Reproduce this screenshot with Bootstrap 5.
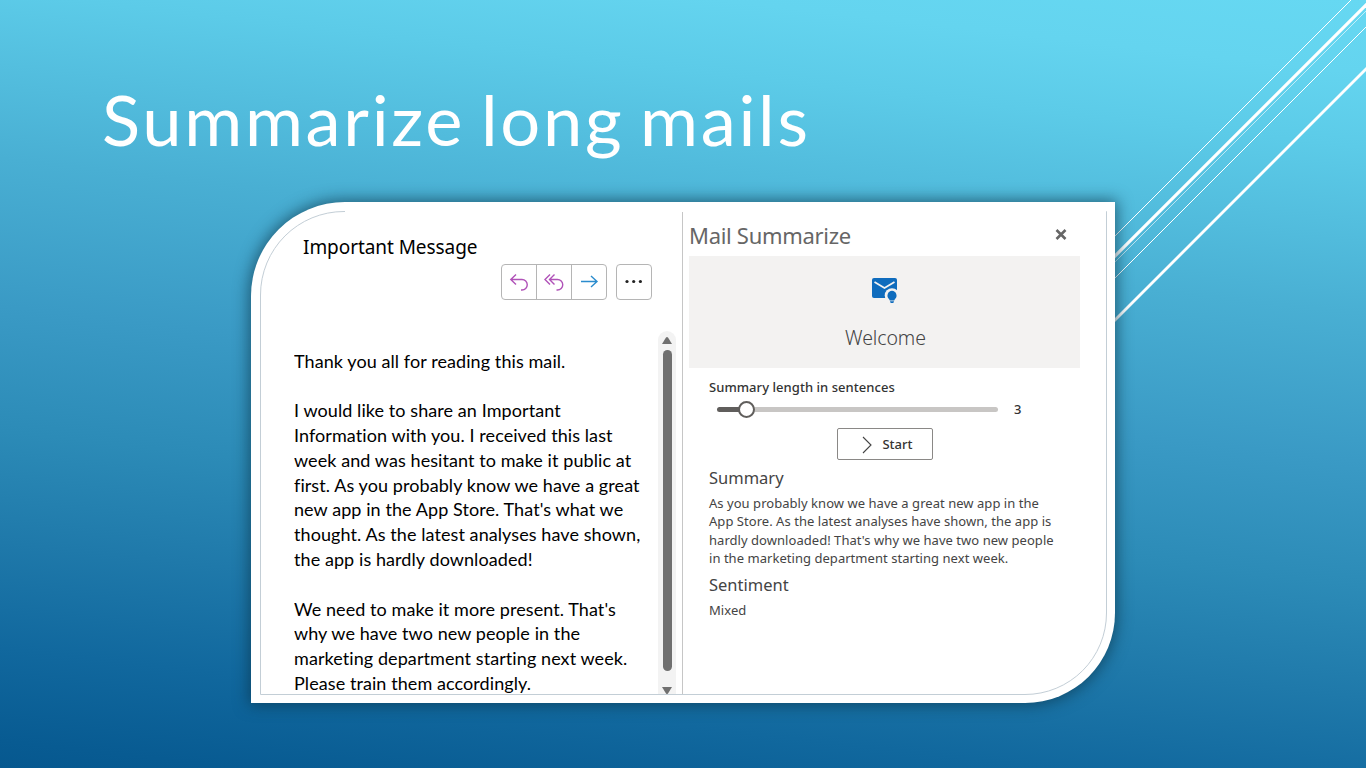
<!DOCTYPE html>
<html lang="en">
<head>
<meta charset="utf-8">
<meta name="viewport" content="width=device-width, initial-scale=1">
<title>Summarize long mails</title>
<link href="https://cdn.jsdelivr.net/npm/bootstrap@5.3.0/dist/css/bootstrap.min.css" rel="stylesheet">
<style>
body{font-family:"Noto Sans","Open Sans",sans-serif}
.slide{width:1366px;height:768px;background:linear-gradient(6.5deg,#06588f 0%,#085b92 3%,#11689e 13%,#1f79aa 24.5%,#2c8bb7 36.5%,#3a9ac5 50%,#49afd3 66%,#5ccbe8 84%,#64d4ef 92%,#66d8f2 100%)}
.rays{left:1106px;top:0;z-index:0}
.slide-title{font:400 70.5px/86px Lato,sans-serif;letter-spacing:2.7px;word-spacing:-5px;padding:76px 0 0 102px;height:202px}
.frame{width:864px;height:501px;margin-left:251px;padding:9px 8px 8px 9px;border-radius:94px 0 90px 0;box-shadow:0 0 15px 2px rgba(10,50,70,.65);z-index:1}
.frame-inner{border:1px solid #c3ced6;border-radius:84px 0 82px 0}
.frame-inner::after{content:"";position:absolute;left:84px;right:0;top:-1px;height:1px;background:#fff}
.mail{width:422px;border-right:1px solid #c6c6c6;padding:22px 0 0 33px}
.subject{font-size:19px;font-weight:400;line-height:26px;letter-spacing:-.06px;padding-left:9px}
.tools{padding:4px 30px 0 0;gap:9px}
.tool-group{border:1px solid #b5b5b5;border-radius:4px;height:36px}
.tool-group button{width:34px;padding:0;border:0;background:none;line-height:0}
.tool-group button+button{border-left:1px solid #b5b5b5;width:35px}
.mail-text{font:400 18px/24.8px Lato,sans-serif;letter-spacing:.08px;white-space:nowrap;padding-top:24.6px}
.mail-text p{margin:0 0 24.8px}
.scroller{width:18px;margin:31px 6px 0 0;background:#f3f3f3;border-radius:9px 9px 0 0}
.scroller .thumb{width:9px;height:321px;background:#707070;border-radius:5px}
.pane{padding:7px 26px 0 6px;color:#555}
.pane-title{font-size:22px;line-height:32px;letter-spacing:-.3px;color:#666}
.hero{height:112px;margin-top:5px;background:#f3f2f1;padding-top:20px}
.hero-text{font-size:19.5px;line-height:28px;font-weight:300;letter-spacing:-.1px;color:#444;margin-top:20px;padding-left:2px}
.controls{padding:9px 20px 0;color:#333}
.lbl{font-size:13px;line-height:20px;font-weight:500;letter-spacing:.05px;color:#333}
.range{height:24px}
.track{width:281px;height:5px;margin-left:8px;border-radius:3px;background:linear-gradient(90deg,#605e5c 29px,#c8c6c4 29px)}
.knob{left:21px;top:-6px;width:17px;height:17px;background:#fff;border:2px solid #605e5c}
.start{width:96px;height:32px;margin-top:7px;border:1px solid #8a8886;border-radius:2px;background:#fff;font-size:13px;font-weight:500;color:#333;gap:9px;padding:1px 0 0 5px}
.sec{font-size:16.5px;line-height:24px;color:#444}
.sec-first{margin-top:6px}
.sec-next{margin-top:5px}
.txt{font-size:13px;line-height:18.4px;letter-spacing:.04px;color:#444;white-space:nowrap}
</style>
</head>
<body class="m-0 overflow-hidden">
<main class="slide position-relative d-flex flex-column overflow-hidden">
  <svg class="rays position-absolute" width="260" height="330" fill="none" stroke="#fff">
    <path d="M245 0 8 237" stroke-width="1"/>
    <path d="M264 1 4 261" stroke-width="3.2"/>
    <path d="M264 7 4 267" stroke-width="1" opacity=".6"/>
    <path d="M264 23 4 283" stroke-width="1"/>
    <path d="M264 65 4 325" stroke-width="2.8"/>
  </svg>
  <h1 class="slide-title text-white m-0">Summarize long mails</h1>
  <section class="frame bg-white position-relative">
    <div class="frame-inner position-relative d-flex h-100">
      <div class="mail d-flex flex-column flex-shrink-0">
        <h2 class="subject m-0 text-black">Important Message</h2>
        <div class="tools d-flex justify-content-end">
          <div class="tool-group d-flex">
            <button type="button" aria-label="Reply"><svg width="20" height="20" viewBox="0 0 20 20" fill="none" stroke="#b052b8" stroke-width="1.4"><path d="M7 2.500 1.800 7.500 7 12.500M2 7.500h11a5.200 5.200 0 0 1 0 10.500h-1"/></svg></button>
            <button type="button" aria-label="Reply all"><svg width="20" height="20" viewBox="0 0 20 20" fill="none" stroke="#b052b8" stroke-width="1.4"><path d="M6 2.500 1 7.500l5 5M10.500 2.500l-5 5 5 5M6 7.500h7.500a5.200 5.200 0 0 1 0 10.500h-1"/></svg></button>
            <button type="button" aria-label="Forward"><svg width="20" height="20" viewBox="0 0 20 20" fill="none" stroke="#2b8ccd" stroke-width="1.4"><path d="M2 9.500h16M12 4l6 5.500-6 5.500"/></svg></button>
          </div>
          <div class="tool-group d-flex"><button type="button" aria-label="More"><svg width="20" height="20" viewBox="0 0 20 20" fill="#222"><circle cx="3" cy="9.500" r="1.600"/><circle cx="9.700" cy="9.500" r="1.600"/><circle cx="16.400" cy="9.500" r="1.600"/></svg></button></div>
        </div>
        <div class="d-flex flex-grow-1 justify-content-between overflow-hidden">
          <div class="mail-text text-black mt-4">
            <p>Thank you all for reading this mail.</p>
            <p>I would like to share an Important<br>Information with you. I received this last<br>week and was hesitant to make it public at<br>first. As you probably know we have a great<br>new app in the App Store. That's what we<br>thought. As the latest analyses have shown,<br>the app is hardly downloaded!</p>
            <p>We need to make it more present. That's<br>why we have two new people in the<br>marketing department starting next week.<br>Please train them accordingly.</p>
          </div>
          <div class="scroller d-flex flex-column align-items-center flex-shrink-0">
            <svg class="flex-shrink-0" width="12" height="19" fill="#707070"><path d="M1 13 5 6.500q1-1.200 2 0L11 13z"/></svg>
            <div class="thumb flex-shrink-0"></div>
            <svg class="flex-shrink-0" width="12" height="26" fill="#707070"><path d="M1 16 5 22.500q1 1.200 2 0L11 16z"/></svg>
          </div>
        </div>
      </div>
      <div class="pane flex-grow-1">
        <div class="d-flex justify-content-between align-items-center">
          <h2 class="pane-title m-0 fw-normal">Mail Summarize</h2>
          <svg width="38" height="14" fill="none" stroke="#666" stroke-width="2.600"><path d="M14.500 2l9 9M23.500 2l-9 9"/></svg>
        </div>
        <div class="hero text-center">
          <svg class="d-block mx-auto" width="28" height="28" viewBox="0 0 28 28"><rect x="1" y="2" width="25" height="20" rx="2" fill="#0f6cbd"/><path d="M3.500 6l10 6L23.500 6" fill="none" stroke="#f3f2f1" stroke-width="1.800"/><circle cx="21" cy="19.500" r="7.300" fill="#f3f2f1"/><path d="M21 14.800a4.800 4.800 0 0 1 3 8.300l-.8 1.500h-4.400L18 23.100a4.800 4.800 0 0 1 3-8.300zM18.900 25.200h4.200l-.8 1.900h-2.600z" fill="#0f6cbd"/></svg>
          <div class="hero-text">Welcome</div>
        </div>
        <div class="controls">
          <div class="lbl">Summary length in sentences</div>
          <div class="range d-flex align-items-center">
            <div class="track position-relative"><span class="knob position-absolute rounded-circle"></span></div>
            <span class="lbl ms-3">3</span>
          </div>
          <button type="button" class="start d-flex mx-auto align-items-center justify-content-center"><svg width="12" height="18" fill="none" stroke="#444" stroke-width="1.100"><path d="M2 1l8 8-8 8"/></svg>Start</button>
          <h3 class="sec sec-first mb-0 fw-normal pb-1">Summary</h3>
          <div class="txt">As you probably know we have a great new app in the<br>App Store. As the latest analyses have shown, the app is<br>hardly downloaded! That's why we have two new people<br>in the marketing department starting next week.</div>
          <h3 class="sec sec-next mb-0 pb-1 fw-normal">Sentiment</h3>
          <div class="txt">Mixed</div>
        </div>
      </div>
    </div>
  </section>
</main>
<script src="https://cdn.jsdelivr.net/npm/bootstrap@5.3.0/dist/js/bootstrap.bundle.min.js"></script>
</body>
</html>
